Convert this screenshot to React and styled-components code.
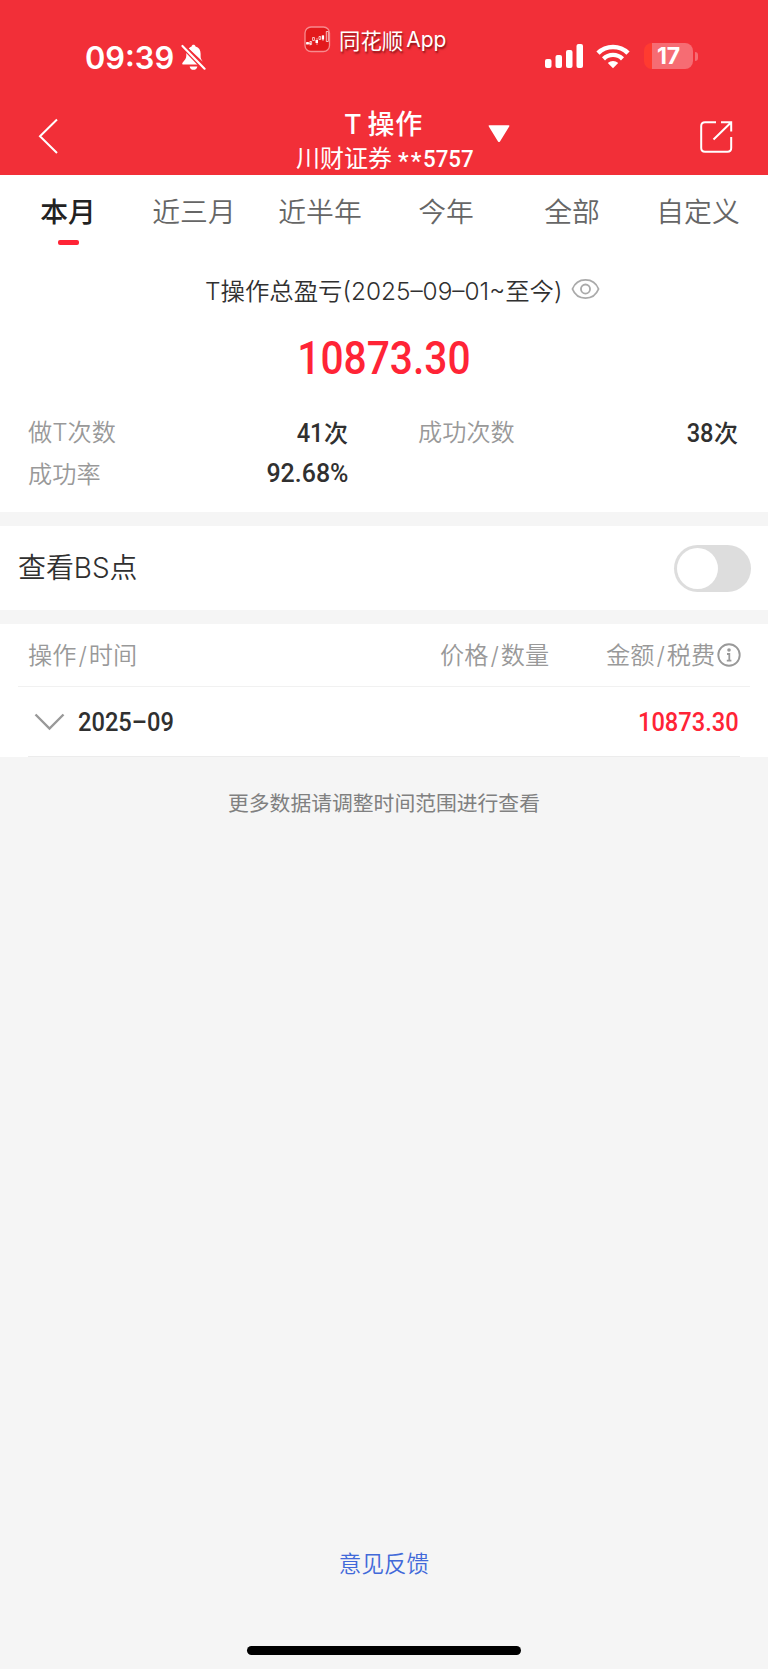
import React,{useState} from 'react'
import styled, { createGlobalStyle } from 'styled-components'

const GlobalStyle = createGlobalStyle`
    *{
        box-sizing:border-box;
    }
    body{
        margin:0;
        background:#f4f4f4;
        font-family:"Inter","Noto Sans CJK SC",sans-serif;
    }
`;

const Container = styled.div`
    width:768px;
    height:1669px;
    display:flex;
    flex-direction:column;
    background:#f5f5f5;
    color:#303030;
    overflow:hidden;
    white-space:nowrap;
`;

const Header = styled.header`
    height:175px;
    background:#f22f38;
    color:#fff;
`;

const StatusBar = styled.div`
    height:100px;
    display:grid;
    grid-template-columns:304px 241px 1fr;
`;
const Clock = styled.div`
    display:flex;
    align-items:center;
    height:38px;
    margin-top:38px;
    padding-left:85px;
    font-size:30.8px;
    font-weight:600;
    svg{
        margin-left:7px;
    }
`;
const AppTag = styled.div`
    display:flex;
    align-items:center;
    height:30px;
    margin-top:24px;
    font-size:21.4px;
    text-shadow:1px 2px 2px rgba(60,0,0,0.6);
    svg{
        margin-right:8px;
    }
`;
const AppWord = styled.span`
    margin-left:3px;
    font-size:21px;
`;
const Signals = styled.div`
    display:flex;
    align-items:center;
    height:28px;
    margin-top:42px;
`;
const Battery = styled.div`
    width:49px;
    height:26px;
    margin-left:14px;
    border-radius:8px;
    background:linear-gradient(90deg,#ff3b30 8px,#f66c73 8px);
    display:flex;
    align-items:center;
    justify-content:center;
    font-size:23px;
    font-weight:700;
    letter-spacing:-0.2px;
`;
const BatteryTip = styled.div`
    width:3px;
    height:9px;
    margin-left:2px;
    border-radius:0 3px 3px 0;
    background:#f66c73;
`;

const NavBar = styled.div`
    height:75px;
    display:grid;
    grid-template-columns:296px 192px 212px 1fr;
    align-items:start;
`;
const BackButton = styled.div`
    padding:18px 0 0 37px;
`;
const TitleBlock = styled.div`
    display:flex;
    flex-direction:column;
`;
const Title = styled.div`
    height:40px;
    line-height:40px;
    margin-top:5px;
    padding-left:48px;
    font-size:27px;
    font-weight:500;
    letter-spacing:0.8px;
    word-spacing:-3px;
`;
const Account = styled.div`
    display:flex;
    height:30px;
    line-height:30px;
    margin-top:-1px;
    font-size:24px;
`;
const Stars = styled.span`
    margin-left:6px;
    padding-top:2px;
    font-family:"Roboto",sans-serif;
    font-weight:500;
    letter-spacing:2px;
`;
const Caret = styled.div`
    margin-top:25px;
    height:17px;
`;
const ShareButton = styled.div`
    margin-top:20px;
`;

const Panel = styled.section`
    background:#fff;
    margin-bottom:14px;
`;

const Tabs = styled.div`
    display:flex;
    padding-left:5px;
    height:70px;
`;
const Tab = styled.div`
    width:126px;
    display:flex;
    flex-direction:column;
    align-items:center;
    font-size:27.8px;
    line-height:40px;
    padding-top:17px;
    font-weight:${props=>props.$active ? 500 : 350};
    color:${props=>props.$active ? "#222" : "#666"};
    cursor:pointer;

    &::after{
        content:"";
        width:21px;
        height:5px;
        margin-top:8px;
        border-radius:2px;
        background:${props=>props.$active ? "#ff2436" : "transparent"};
    }
`;

const SummaryTitle = styled.div`
    height:40px;
    margin-top:24px;
    padding-left:205px;
    display:flex;
    align-items:center;
    font-size:24.4px;
    font-weight:350;
    svg{
        margin-left:9px;
    }
`;
const Digits = styled.span`
    display:inline-block;
    font-family:"Roboto",sans-serif;
    font-weight:500;
    font-size:${props=>props.$size || 26}px;
    transform:scaleX(${props=>props.$scale || 0.91});
    transform-origin:${props=>props.$origin || "right"} center;
`;
const Total = styled.div`
    height:60px;
    line-height:60px;
    margin-top:19px;
    text-align:center;
    color:#ff2436;
`;
const Stats = styled.div`
    display:grid;
    grid-template-columns:320px 320px;
    column-gap:70px;
    grid-auto-rows:41.5px;
    height:124px;
    padding:23px 29px 0 28px;
`;
const Stat = styled.div`
    display:flex;
    align-items:center;
    justify-content:space-between;
`;
const StatLabel = styled.span`
    padding-bottom:2px;
    font-size:24.2px;
    font-weight:350;
    color:#999;
`;
const StatValue = styled.span`
    font-size:24px;
    font-weight:500;
`;

const SwitchPanel = styled(Panel)`
    height:84px;
    display:flex;
    align-items:center;
    justify-content:space-between;
    padding:0 17px 0 18px;
    font-size:27.9px;
    font-weight:350;
`;
const SwitchLabel = styled.span`
    padding-bottom:5px;
`;
const Switch = styled.button`
    width:77px;
    height:47px;
    padding:3px;
    border:none;
    border-radius:24px;
    background:#ddd;
    display:flex;
    justify-content:${props=>props.$on ? "flex-end" : "flex-start"};
    cursor:pointer;

    &::before{
        content:"";
        width:41px;
        height:41px;
        border-radius:50%;
        background:#fff;
    }
`;

const TablePanel = styled(Panel)`
    height:133px;
    margin-bottom:0;
`;
const TableHead = styled.div`
    height:63px;
    margin:0 18px;
    padding:0 10px 0 10px;
    border-bottom:1px solid #f1f1f1;
    display:grid;
    grid-template-columns:412px 166px 1fr;
    align-items:center;
    font-size:24.2px;
    font-weight:350;
    color:#999;
`;
const HeadCell = styled.div`
    display:flex;
    align-items:center;
    svg{
        margin-left:2px;
    }
`;
const HeadText = styled.span`
    padding-bottom:3px;
`;
const Slash = styled.span`
    margin:0 2px;
`;
const MonthRow = styled.div`
    height:70px;
    margin:0 28px;
    padding:0 1px 0 6px;
    border-bottom:1px solid #ececec;
    display:flex;
    align-items:center;
`;
const Month = styled.div`
    flex:1;
    padding-left:13px;
`;
const Amount = styled.div`
    color:#ff2436;
`;

const Hint = styled.div`
    height:40px;
    line-height:40px;
    margin-top:27px;
    text-align:center;
    font-size:20.8px;
    color:#808080;
`;
const Feedback = styled.a`
    height:40px;
    line-height:40px;
    margin-top:auto;
    text-align:center;
    font-size:22.6px;
    font-weight:350;
    color:#4169d9;
`;
const HomeBar = styled.div`
    width:274px;
    height:9px;
    margin:62px auto 14px;
    border-radius:5px;
    background:#000;
`;

const tabs = ["本月","近三月","近半年","今年","全部","自定义"];

const BellOff = () => (
    <svg width="25" height="27" viewBox="0 0 26 28" fill="#fff">
        <path d="M8 4.6C9 3.5 10 2.900 11 2.600C11.200 1.400 12 .8 13 .8s1.900.6 2.100 1.800c3.600 1 5.300 3.800 5.300 7.400v3c0 2.100.7 3.300 2.300 5.300z" />
        <path d="M5.500 9L17.700 21.400H2.500c-1.200 0-1.600-1-.9-1.900 2.500-2.800 3.800-4.300 3.900-7.200z" />
        <path d="M9 23.300h8c-.4 2.200-1.900 3.500-4 3.500s-3.600-1.300-4-3.500z" />
        <path d="M1.500 1.500L24.500 25.700" stroke="#f22f38" strokeWidth="5" />
        <path d="M1.500 2L24.500 25.700" stroke="#fff" strokeWidth="2.200" strokeLinecap="round" />
    </svg>
)

const AppIcon = () => (
    <svg width="27" height="27" viewBox="0 0 27 27" fill="none">
        <rect x="1" y="1" width="24.500" height="24.500" rx="6" fill="#e3191c" stroke="#f78b8e" strokeWidth="1.300" />
        <path d="M2 17.500h5M6 15.500v4M13 12v7M19 9v6" stroke="#fff" strokeWidth=".6" />
        <path d="M2.200 16h2.600v2.600H2.200zM11.500 14h2.500v3h-2.500zM17.800 9.500h2.300v4h-2.300z" fill="#fff" />
        <path d="M6 15.500h1.600v3H6zM8.600 11.500h1.800v3H8.600zM15 10.500h1.600v3H15zM22.300 5.500h2v10h-2z" stroke="#fff" strokeWidth=".7" />
    </svg>
)

const SignalBars = () => (
    <svg width="38" height="24" viewBox="0 0 38 24" fill="#fff">
        <rect x="0" y="15" width="6.500" height="9" rx="2" />
        <rect x="10.500" y="11" width="6.500" height="13" rx="2" />
        <rect x="21" y="6" width="6.500" height="18" rx="2" />
        <rect x="31.500" y="0" width="6.500" height="24" rx="2" />
    </svg>
)

const WifiSvg = styled.svg`
    margin-left:13px;
`;
const Wifi = () => (
    <WifiSvg width="34" height="25" viewBox="0 0 34 25" fill="none">
        <path d="M2 9.200C10.200 1 23.800 1 32 9.200" stroke="#fff" strokeWidth="4.600" />
        <path d="M7.500 14.800C12.900 9.600 21.100 9.600 26.500 14.800" stroke="#fff" strokeWidth="4.400" />
        <path d="M11.800 19c2.900-2.700 7.500-2.700 10.400 0L17 24.300z" fill="#fff" />
    </WifiSvg>
)

const Eye = () => (
    <svg width="29" height="22" viewBox="0 0 30 22" fill="none" stroke="#aaa" strokeWidth="1.900">
        <path d="M1.500 11C4 4.700 9 1.600 15 1.600S26 4.700 28.500 11C26 17.300 21 20.400 15 20.400S4 17.300 1.500 11z" />
        <circle cx="15" cy="11" r="4.700" />
    </svg>
)

const Info = () => (
    <svg width="24" height="24" viewBox="0 0 24 24" fill="none" stroke="#999">
        <circle cx="12" cy="12" r="10.700" strokeWidth="1.900" />
        <circle cx="12" cy="7" r="1.800" fill="#999" stroke="none" />
        <path d="M10 11h2.300v6.700M9.800 17.700h4.600" strokeWidth="1.800" />
    </svg>
)

const App = () => {
    const [active,setActive] = useState(0);
    const [showBS,setShowBS] = useState(false);

    return (
        <Container>
            <GlobalStyle />
            <Header>
                <StatusBar>
                    <Clock>09:39<BellOff /></Clock>
                    <AppTag><AppIcon />同花顺<AppWord>App</AppWord></AppTag>
                    <Signals>
                        <SignalBars />
                        <Wifi />
                        <Battery>17</Battery>
                        <BatteryTip />
                    </Signals>
                </StatusBar>
                <NavBar>
                    <BackButton>
                        <svg width="22" height="36" viewBox="0 0 22 36" fill="none" stroke="#fff" strokeWidth="2">
                            <path d="M20 1.500L3 18.200L20 35" />
                        </svg>
                    </BackButton>
                    <TitleBlock>
                        <Title>T 操作</Title>
                        <Account>川财证券<Stars>**</Stars><Digits $size={24} $origin="left" $scale={0.93}>5757</Digits></Account>
                    </TitleBlock>
                    <Caret>
                        <svg width="22" height="18" viewBox="0 0 22 18" fill="#fff">
                            <path d="M1.500.2h19q1.500 0 .7 1.300L12 16.500q-1 1.200-2 0L.8 1.500Q0 .2 1.500.2z" />
                        </svg>
                    </Caret>
                    <ShareButton>
                        <svg width="33" height="34" viewBox="0 0 33 34" fill="none" stroke="#fff" strokeWidth="2">
                            <path d="M16 2.300H5Q1.200 2.300 1.200 6V28Q1.200 31.800 5 31.800H27.500Q31.200 31.800 31.200 28V17" />
                            <path d="M21 2.300H31.200V11.500M31 2.500L13.500 19.500" />
                        </svg>
                    </ShareButton>
                </NavBar>
            </Header>

            <Panel>
                <Tabs>
                    {tabs.map((tab,i)=>(
                        <Tab key={tab} $active={i === active} onClick={()=>setActive(i)}>{tab}</Tab>
                    ))}
                </Tabs>
                <SummaryTitle>T操作总盈亏(2025–09–01~至今)<Eye /></SummaryTitle>
                <Total><Digits $size={46} $origin="center" $scale={0.885}>10873.30</Digits></Total>
                <Stats>
                    <Stat>
                        <StatLabel>做T次数</StatLabel>
                        <StatValue><Digits>41</Digits>次</StatValue>
                    </Stat>
                    <Stat>
                        <StatLabel>成功次数</StatLabel>
                        <StatValue><Digits>38</Digits>次</StatValue>
                    </Stat>
                    <Stat>
                        <StatLabel>成功率</StatLabel>
                        <StatValue><Digits $scale={0.96}>92.68%</Digits></StatValue>
                    </Stat>
                </Stats>
            </Panel>

            <SwitchPanel>
                <SwitchLabel>查看BS点</SwitchLabel>
                <Switch $on={showBS} onClick={()=>setShowBS(!showBS)} />
            </SwitchPanel>

            <TablePanel>
                <TableHead>
                    <HeadCell><HeadText>操作<Slash>/</Slash>时间</HeadText></HeadCell>
                    <HeadCell><HeadText>价格<Slash>/</Slash>数量</HeadText></HeadCell>
                    <HeadCell><HeadText>金额<Slash>/</Slash>税费</HeadText><Info /></HeadCell>
                </TableHead>
                <MonthRow>
                    <svg width="31" height="18" viewBox="0 0 31 18" fill="none" stroke="#999" strokeWidth="2.400">
                        <path d="M1.500 1.500L15.500 15.500L29.500 1.500" />
                    </svg>
                    <Month><Digits $origin="left" $scale={0.91}>2025–09</Digits></Month>
                    <Amount><Digits>10873.30</Digits></Amount>
                </MonthRow>
            </TablePanel>

            <Hint>更多数据请调整时间范围进行查看</Hint>
            <Feedback>意见反馈</Feedback>
            <HomeBar />
        </Container>
    )
}

export default App
